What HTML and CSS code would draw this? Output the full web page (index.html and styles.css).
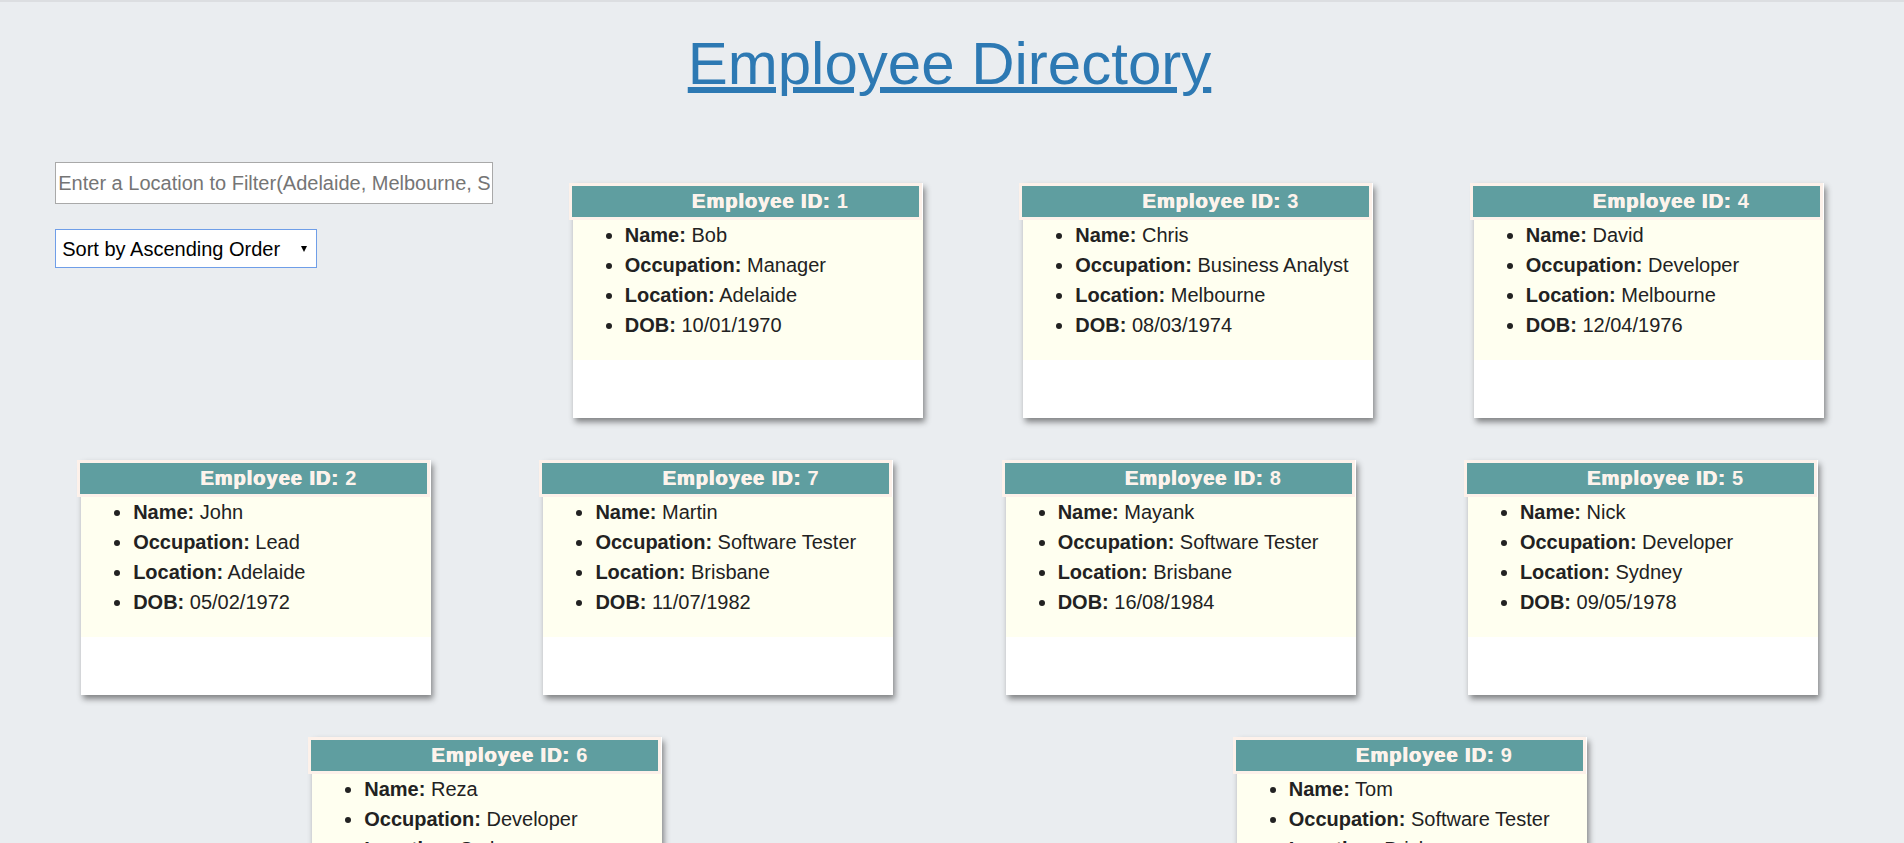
FILE: index.html
```html
<!DOCTYPE html>
<html lang="en">
<head>
    <meta charset="UTF-8">
    <title>Employee Directory</title>
    <link rel="stylesheet" href="styles.css">
</head>
<body>
    <h1 class="title"><span>Employee Directory</span></h1>

    <div class="directory">
        <div class="controls">
            <input class="search" type="text" placeholder="Enter a Location to Filter(Adelaide, Melbourne, Sydney, Brisbane)">
            <div class="sort-wrap">
                <select class="sort">
                    <option>Sort by Ascending Order</option>
                    <option>Sort by Descending Order</option>
                </select>
            </div>
        </div>

        <div class="card">
            <h3 class="card-title"><span class="label">Employee ID:</span> 1</h3>
            <ul class="card-info">
                <li><b>Name:</b> Bob</li>
                <li><b>Occupation:</b> Manager</li>
                <li><b>Location:</b> Adelaide</li>
                <li><b>DOB:</b> 10/01/1970</li>
            </ul>
        </div>

        <div class="card">
            <h3 class="card-title"><span class="label">Employee ID:</span> 3</h3>
            <ul class="card-info">
                <li><b>Name:</b> Chris</li>
                <li><b>Occupation:</b> Business Analyst</li>
                <li><b>Location:</b> Melbourne</li>
                <li><b>DOB:</b> 08/03/1974</li>
            </ul>
        </div>

        <div class="card">
            <h3 class="card-title"><span class="label">Employee ID:</span> 4</h3>
            <ul class="card-info">
                <li><b>Name:</b> David</li>
                <li><b>Occupation:</b> Developer</li>
                <li><b>Location:</b> Melbourne</li>
                <li><b>DOB:</b> 12/04/1976</li>
            </ul>
        </div>

        <div class="card">
            <h3 class="card-title"><span class="label">Employee ID:</span> 2</h3>
            <ul class="card-info">
                <li><b>Name:</b> John</li>
                <li><b>Occupation:</b> Lead</li>
                <li><b>Location:</b> Adelaide</li>
                <li><b>DOB:</b> 05/02/1972</li>
            </ul>
        </div>

        <div class="card">
            <h3 class="card-title"><span class="label">Employee ID:</span> 7</h3>
            <ul class="card-info">
                <li><b>Name:</b> Martin</li>
                <li><b>Occupation:</b> Software Tester</li>
                <li><b>Location:</b> Brisbane</li>
                <li><b>DOB:</b> 11/07/1982</li>
            </ul>
        </div>

        <div class="card">
            <h3 class="card-title"><span class="label">Employee ID:</span> 8</h3>
            <ul class="card-info">
                <li><b>Name:</b> Mayank</li>
                <li><b>Occupation:</b> Software Tester</li>
                <li><b>Location:</b> Brisbane</li>
                <li><b>DOB:</b> 16/08/1984</li>
            </ul>
        </div>

        <div class="card">
            <h3 class="card-title"><span class="label">Employee ID:</span> 5</h3>
            <ul class="card-info">
                <li><b>Name:</b> Nick</li>
                <li><b>Occupation:</b> Developer</li>
                <li><b>Location:</b> Sydney</li>
                <li><b>DOB:</b> 09/05/1978</li>
            </ul>
        </div>

        <div class="card">
            <h3 class="card-title"><span class="label">Employee ID:</span> 6</h3>
            <ul class="card-info">
                <li><b>Name:</b> Reza</li>
                <li><b>Occupation:</b> Developer</li>
                <li><b>Location:</b> Sydney</li>
                <li><b>DOB:</b> 22/06/1980</li>
            </ul>
        </div>

        <div class="card">
            <h3 class="card-title"><span class="label">Employee ID:</span> 9</h3>
            <ul class="card-info">
                <li><b>Name:</b> Tom</li>
                <li><b>Occupation:</b> Software Tester</li>
                <li><b>Location:</b> Brisbane</li>
                <li><b>DOB:</b> 03/09/1986</li>
            </ul>
        </div>
    </div>
</body>
</html>
```

FILE: styles.css
```css
body {
    margin: 0;
    border-top: 2px solid #dcdee1;
    background-color: #eaedf0;
    font-family: "Liberation Sans", Arial, sans-serif;
    color: #222;
}
.title {
    margin: 27px 0 0;
    padding-right: 5px;
    text-align: center;
    font-size: 60px;
    font-weight: normal;
    line-height: 69px;
}
.title span {
    color: #2d79b3;
    text-decoration: underline;
}
.directory {
    display: flex;
    flex-wrap: wrap;
    justify-content: space-around;
    align-items: flex-start;
    width: 1849px;
    margin: 64px 0 0 25px;
}
.controls {
    width: 438px;
    margin: 0 29px 0 30px;
}
.search {
    display: block;
    box-sizing: border-box;
    width: 438px;
    height: 42px;
    padding: 0 2px;
    border: 1px solid #a9a9a9;
    background: white;
    font-family: "Liberation Sans", Arial, sans-serif;
    font-size: 20px;
}
.search::placeholder {
    color: #757575;
}
.sort-wrap {
    position: relative;
    width: 262px;
    margin-top: 25px;
}
.sort {
    appearance: none;
    display: block;
    box-sizing: border-box;
    width: 262px;
    height: 39px;
    padding: 0 0 0 6px;
    border: 1px solid #6f9ee8;
    border-radius: 0;
    background: white;
    color: black;
    font-family: "Liberation Sans", Arial, sans-serif;
    font-size: 20px;
}
.sort-wrap::after {
    content: "";
    position: absolute;
    right: 10px;
    top: 17px;
    border-left: 3px solid transparent;
    border-right: 3px solid transparent;
    border-top: 6px solid black;
    pointer-events: none;
}
.card {
    width: 350px;
    height: 235px;
    margin: 21px 50px;
    background: white;
    box-shadow: 2px 4px 6px rgba(0,0,0,0.45);
}
.card-title {
    box-sizing: border-box;
    width: 353px;
    margin: 0 0 0 -4px;
    padding: 4px 0 4px 50px;
    border: 3px solid #fdf1ea;
    background-color: #5f9ea0;
    color: #fdf3ec;
    text-align: center;
    font-size: 20px;
    line-height: 23px;
    letter-spacing: 1px;
}
.card-title .label {
    text-shadow: 1px 0 0 #fdf3ec, 0.5px 0.4px 0 #fdf3ec;
}
.card-info {
    margin: 0;
    padding: 0 0 20px 52px;
    background-color: #fffff0;
    font-size: 20px;
    line-height: 30px;
}
```
